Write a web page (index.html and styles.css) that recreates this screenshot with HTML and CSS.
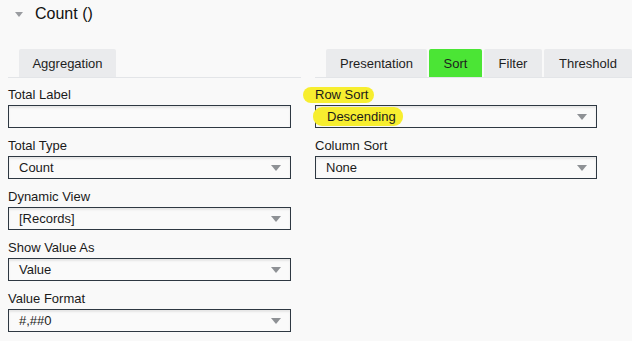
FILE: index.html
```html
<!DOCTYPE html>
<html lang="en">
<head>
    <meta charset="UTF-8">
    <meta name="viewport" content="width=device-width, initial-scale=1.0">
    <title>Count ()</title>
    <link rel="stylesheet" href="styles.css">
</head>
<body>
    <div class="header">
        <span class="caret"></span>
        <span class="title">Count ()</span>
    </div>

    <div class="panels">
        <div class="panel left">
            <div class="tabs">
                <div class="tab">Aggregation</div>
            </div>
            <div class="field">
                <label>Total Label</label>
                <div class="input"></div>
            </div>
            <div class="field">
                <label>Total Type</label>
                <div class="input select">Count<span class="arrow"></span></div>
            </div>
            <div class="field">
                <label>Dynamic View</label>
                <div class="input select">[Records]<span class="arrow"></span></div>
            </div>
            <div class="field">
                <label>Show Value As</label>
                <div class="input select">Value<span class="arrow"></span></div>
            </div>
            <div class="field">
                <label>Value Format</label>
                <div class="input select">#,##0<span class="arrow"></span></div>
            </div>
        </div>

        <div class="panel right">
            <div class="tabs">
                <div class="tab presentation">Presentation</div>
                <div class="tab sort active">Sort</div>
                <div class="tab filter">Filter</div>
                <div class="tab threshold">Threshold</div>
            </div>
            <div class="field">
                <label><span class="mark mark-label">Row Sort</span></label>
                <div class="input select"><span class="mark mark-value">Descending</span><span class="arrow"></span></div>
            </div>
            <div class="field">
                <label>Column Sort</label>
                <div class="input select">None<span class="arrow"></span></div>
            </div>
        </div>
    </div>
</body>
</html>
```

FILE: styles.css
```css
body {
    margin: 0;
    font-family: Arial, "Liberation Sans", sans-serif;
    font-size: 13px;
    color: #1a1a1a;
    background-color: #f9f9f9;
    height: 341px;
    overflow: hidden;
}
.header {
    display: flex;
    align-items: center;
    height: 28px;
    padding-left: 15px;
}
.caret {
    width: 0;
    height: 0;
    border-left: 4px solid transparent;
    border-right: 4px solid transparent;
    border-top: 5px solid #9a9ca0;
    margin-right: 12px;
    margin-top: 1px;
}
.title {
    font-size: 16px;
    color: #111;
}
.panels {
    display: flex;
    gap: 14px;
    padding-left: 8px;
    margin-top: 21px;
}
.panel.left {
    width: 293px;
}
.panel.right {
    flex: 1;
}
.tabs {
    display: flex;
    gap: 2px;
    padding-left: 11px;
    border-bottom: 1px solid #e3e5e8;
    margin-bottom: 9px;
}
.tab {
    height: 28px;
    line-height: 29px;
    background-color: #eaebed;
    border-radius: 2px 2px 0 0;
    text-align: center;
    color: #1e1e1e;
}
.left .tab { width: 97px; }
.presentation { width: 101px; }
.sort { width: 53px; }
.filter { width: 58px; }
.threshold { width: 88px; }
.tab.active {
    background-color: #4be535;
}
.field {
    margin-bottom: 10px;
}
.field label {
    display: block;
    height: 16px;
    line-height: 16px;
    margin-bottom: 2px;
}
.input {
    width: 283px;
    height: 23px;
    box-sizing: border-box;
    border: 1px solid #2e3842;
    background-color: #fafafa;
    box-shadow: inset 0 2px 2px #e6e6e6;
    line-height: 21px;
    padding-left: 10px;
    position: relative;
    font-size: 13px;
}
.right .input {
    width: 282px;
}
.arrow {
    position: absolute;
    right: 9px;
    top: 8px;
    width: 0;
    height: 0;
    border-left: 5px solid transparent;
    border-right: 5px solid transparent;
    border-top: 6px solid #8e9195;
}
.mark {
    background-color: #f7ee2f;
    border-radius: 9px;
}
.mark-label {
    display: inline-block;
    margin-left: -12px;
    padding: 0 6px 0 12px;
    line-height: 16px;
}
.mark-value {
    display: inline-block;
    margin-left: -13px;
    padding: 0 7px 0 14px;
    line-height: 19px;
}
```
